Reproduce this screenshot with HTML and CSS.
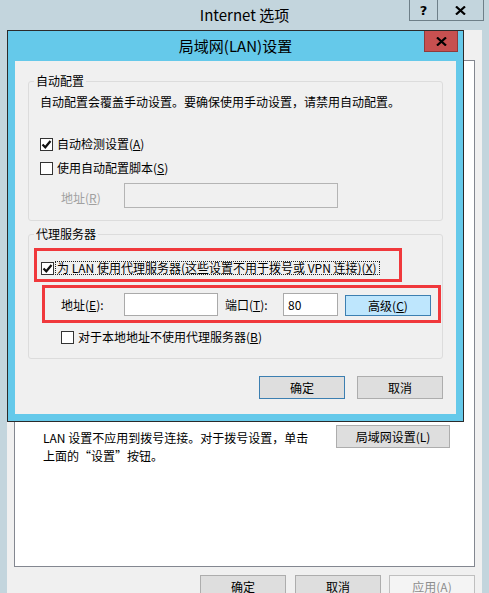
FILE: index.html
```html
<!DOCTYPE html>
<html lang="zh-CN">
<head>
<meta charset="utf-8">
<title>Internet 选项</title>
<link rel="stylesheet" href="styles.css">
</head>
<body>
<div class="win">
  <div class="win-title">
    <div class="title">Internet 选项</div>
    <div class="win-controls">
      <div class="ctl help">?</div>
      <div class="ctl close"><svg width="11" height="9" viewBox="0 0 11 9"><path d="M1 0.5 L10 8.5 M10 0.5 L1 8.5" stroke="#000" stroke-width="2.2" fill="none"/></svg></div>
    </div>
  </div>
  <div class="client">
    <div class="panel">
      <div class="panel-text">LAN 设置不应用到拨号连接。对于拨号设置，单击<br>上面的“设置”按钮。</div>
      <div class="btn panel-btn">局域网设置(L)</div>
    </div>
    <div class="win-buttons">
      <div class="btn">确定</div>
      <div class="btn b2">取消</div>
      <div class="btn b3 disabled">应用(<u>A</u>)</div>
    </div>
  </div>
</div>

<div class="lan">
  <div class="lan-title">局域网(LAN)设置</div>
  <div class="lan-close"><svg width="11" height="9" viewBox="0 0 11 9"><path d="M1 0.5 L10 8.5 M10 0.5 L1 8.5" stroke="#000" stroke-width="2.2" fill="none"/></svg></div>
  <div class="lan-body">
    <fieldset class="group g1">
      <legend>自动配置</legend>
      <div class="fs-body">
        <div class="desc">自动配置会覆盖手动设置。要确保使用手动设置，请禁用自动配置。</div>
        <div class="cb-row r1"><span class="cb"><svg width="11" height="11" viewBox="0 0 11 11"><path d="M1.5 5.5 L4.3 8.3 L9.5 2" stroke="#111" stroke-width="2.2" fill="none"/></svg></span><span>自动检测设置(<u>A</u>)</span></div>
        <div class="cb-row r2"><span class="cb"></span><span>使用自动配置脚本(<u>S</u>)</span></div>
        <div class="addr-row">
          <span class="addr-label disabled-text">地址(<u>R</u>)</span>
          <div class="input disabled-input"></div>
        </div>
      </div>
    </fieldset>
    <fieldset class="group g2">
      <legend>代理服务器</legend>
      <div class="fs-body b2">
        <div class="red red1">
          <div class="proxy-row"><span class="cb"><svg width="11" height="11" viewBox="0 0 11 11"><path d="M1.5 5.5 L4.3 8.3 L9.5 2" stroke="#111" stroke-width="2.2" fill="none"/></svg></span><span class="focus">为 LAN 使用代理服务器(这些设置不用于拨号或 VPN 连接)(<u>X</u>)</span></div>
        </div>
        <div class="red red2">
          <span class="lbl l1">地址(<u>E</u>):</span>
          <div class="input in1"></div>
          <span class="lbl l2">端口(<u>T</u>):</span>
          <div class="input in2">80</div>
          <div class="btn adv">高级(<u>C</u>)</div>
        </div>
        <div class="cb-row r3"><span class="cb"></span><span>对于本地地址不使用代理服务器(<u>B</u>)</span></div>
      </div>
    </fieldset>
    <div class="dlg-buttons">
      <div class="btn default">确定</div>
      <div class="btn">取消</div>
    </div>
  </div>
</div>
</body>
</html>
```
FILE: styles.css
```css
* { box-sizing: border-box; }
html, body { margin: 0; padding: 0; }
body {
  width: 489px;
  height: 593px;
  overflow: hidden;
  position: relative;
  background: #c3d5dd;
  font-family: "Noto Sans CJK SC", "Microsoft YaHei", sans-serif;
  font-size: 12px;
  color: #000;
}
u { text-decoration: underline; text-underline-offset: 1px; }

.win-title {
  height: 30px;
  display: grid;
  grid-template-columns: 1fr auto 1fr;
  align-items: start;
}
.win-title .title {
  grid-column: 2;
  font-size: 15px;
  line-height: 30px;
}
.win-controls {
  grid-column: 3;
  justify-self: end;
  display: flex;
  margin-right: 5px;
}
.ctl {
  height: 21px;
  border: 1px solid #6e7f88;
  border-top: none;
  display: flex;
  align-items: center;
  justify-content: center;
  font-weight: bold;
  font-size: 13px;
  font-family: "DejaVu Sans", sans-serif;
}
.ctl.help { width: 29px; }
.ctl.close { width: 46px; border-left: none; }

.client {
  margin: 0 7px;
  height: 563px;
  background: #f0f0f0;
  padding: 30px 7px 0 7px;
}
.panel {
  height: 507px;
  background: #fff;
  border: 1px solid #838790;
  padding: 364px 24px 0 28px;
  display: flex;
  justify-content: space-between;
  align-items: flex-start;
}
.panel-text { margin-top: 4px; line-height: 18px; }
.btn {
  width: 86px;
  height: 23px;
  background: #dedede;
  border: 1px solid #adadad;
  display: flex;
  align-items: center;
  justify-content: center;
  line-height: 14px;
}
.panel-btn { width: 114px; }
.win-buttons {
  display: flex;
  justify-content: flex-end;
  margin-top: 8px;
}
.win-buttons .b2 { margin-left: 9px; }
.win-buttons .b3 { margin-left: 8px; }
.btn.disabled {
  background: #f4f4f4;
  border-color: #bfbfbf;
  color: #8d8d8d;
}

.lan {
  position: absolute;
  left: 7px;
  top: 30px;
  width: 457px;
  height: 392px;
  background: #65c9ea;
  border: 1px solid #2b2b2b;
  padding: 0 7px 7px;
  display: flex;
  flex-direction: column;
}
.lan-title {
  height: 30px;
  line-height: 30px;
  text-align: center;
  font-size: 15px;
}
.lan-close {
  position: absolute;
  top: 0;
  right: 5px;
  width: 34px;
  height: 21px;
  background: #c75050;
  border: 1px solid #8f3a3a;
  border-top: none;
  display: flex;
  align-items: center;
  justify-content: center;
}
.lan-body {
  flex: 1;
  background: #f0f0f0;
  padding: 11px 13px 0;
}

.group {
  margin: 0;
  padding: 0;
  border: 1px solid #dcdcdc;
  border-radius: 3px;
  min-width: 0;
}
.group legend {
  margin-left: 5px;
  padding: 0 2px;
  line-height: 18px;
}
.g2 { margin-top: 4px; }
.fs-body { padding: 0 11px 12px; }
.desc { margin-top: 3px; line-height: 18px; }

.cb-row {
  display: flex;
  align-items: center;
  height: 18px;
  line-height: 18px;
}
.cb {
  width: 13px;
  height: 13px;
  border: 1px solid #333;
  background: #fff;
  display: flex;
  align-items: center;
  justify-content: center;
  margin-right: 4px;
  flex: none;
}
.r1 { margin-top: 24px; }
.r2 { margin-top: 6px; }

.addr-row {
  display: flex;
  align-items: flex-start;
  margin-top: 6px;
}
.addr-label {
  width: 63px;
  margin-left: 21px;
  margin-top: 6px;
  line-height: 18px;
}
.disabled-text { color: #a0a0a0; }
.input {
  height: 23px;
  background: #fff;
  border: 1px solid #aaaaaa;
  line-height: 21px;
  padding-left: 4px;
}
.disabled-input {
  width: 214px;
  height: 25px;
  background: #f0f0f0;
  border-color: #b4b4b4;
}

.fs-body.b2 { padding: 5px 0 12px 5px; }
.red { border: 3px solid #f0383c; }
.red1 {
  width: 368px;
  height: 34px;
  padding: 10px 0 0 4px;
}
.proxy-row {
  display: flex;
  align-items: center;
  height: 14px;
}
.proxy-row .cb { margin-right: 1px; }
.focus {
  border: 1px dotted #222;
  padding: 0 2px 0 1px;
  line-height: 12px;
  height: 14px;
  display: flex;
  align-items: center;
}
.red2 {
  margin-top: 3px;
  margin-left: 8px;
  width: 399px;
  height: 38px;
  padding: 5px 0 0 16px;
  display: flex;
  align-items: flex-start;
}
.lbl { line-height: 23px; }
.l1 { width: 63px; }
.l2 { width: 58px; margin-left: 7px; }
.in1 { width: 94px; }
.in2 { width: 55px; }
.btn.adv {
  margin-left: 7px;
  margin-top: 2px;
  height: 21px;
  background: #bee6fd;
  border-color: #3c7fb1;
}
.r3 { margin-top: 5px; padding-left: 27px; }

.dlg-buttons {
  display: flex;
  justify-content: flex-end;
  gap: 12px;
  margin-top: 17px;
}
.btn.default { border-color: #3c7fb1; }
```
